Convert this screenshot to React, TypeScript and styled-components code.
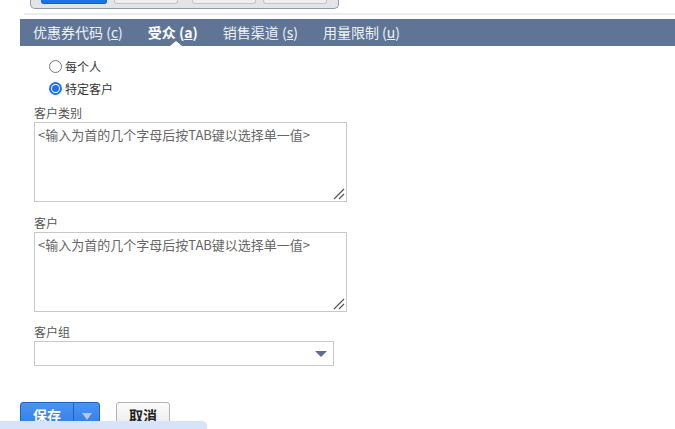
import React from 'react'
import styled, { createGlobalStyle } from 'styled-components'

const GlobalStyle = createGlobalStyle`
  html, body {
    margin: 0;
    padding: 0;
    background: #fff;
    overflow: hidden;
  }
  body {
    font-family: "Noto Sans CJK SC", "Open Sans", sans-serif;
    color: #333;
  }
`

const Page = styled.div`
  width: 675px;
  height: 429px;
  position: relative;
  overflow: hidden;
`

const TopStrip = styled.div`
  padding-left: 30px;
`

const ButtonTray = styled.div`
  box-sizing: border-box;
  width: 309px;
  height: 9px;
  display: flex;
  align-items: flex-end;
  gap: 7px;
  padding: 0 9px 4px 10px;
  background: #e2e4e8;
  border: 1px solid #8e9bb3;
  border-top: none;
  border-radius: 0 0 5px 5px;
`

const TrayButton = styled.div<{ $primary?: boolean; $gapLeft?: boolean }>`
  width: ${(p) => (p.$primary ? 66 : 64)}px;
  height: 5px;
  margin-left: ${(p) => (p.$gapLeft ? 7 : 0)}px;
  border-radius: 0 0 3px 3px;
  box-sizing: border-box;
  background: ${(p) => (p.$primary ? '#1a73e8' : '#eeeeee')};
  border: 1px solid ${(p) => (p.$primary ? '#1560c8' : '#c4c4c4')};
  border-top: none;
`

const Rule = styled.div`
  margin: 4px 0 0 24px;
  height: 2px;
  background: #ececec;
`

const TabBar = styled.div`
  margin: 4px 0 0 20px;
  height: 27px;
  background: #607595;
  display: flex;
  align-items: center;
  padding-left: 13px;
  gap: 25px;
`

const Tab = styled.div<{ $active?: boolean }>`
  position: relative;
  font-size: 14px;
  line-height: 27px;
  font-weight: ${(p) => (p.$active ? 700 : 400)};
  color: ${(p) => (p.$active ? '#ffffff' : '#eef2f8')};
  white-space: nowrap;

  u {
    text-decoration: underline;
  }

  ${(p) =>
    p.$active &&
    `
    &::after {
      content: '';
      position: absolute;
      left: 50%;
      bottom: 0;
      margin-left: -3px;
      border-left: 6px solid transparent;
      border-right: 6px solid transparent;
      border-bottom: 5px solid #ffffff;
    }
  `}
`

const Form = styled.div`
  padding: 13px 0 0 34px;
  display: flex;
  flex-direction: column;
`

const RadioGroup = styled.div`
  padding-left: 15px;
  display: flex;
  flex-direction: column;
  gap: 7px;
  margin-bottom: 10px;
`

const RadioRow = styled.label`
  display: flex;
  align-items: center;
  gap: 3px;
  font-size: 12px;
  line-height: 15px;
  color: #333;
`

const RadioDot = styled.span<{ $checked?: boolean }>`
  box-sizing: border-box;
  width: 13px;
  height: 13px;
  border-radius: 50%;
  border: ${(p) => (p.$checked ? '2px solid #1a73e8' : '1px solid #767676')};
  background: #fff;
  display: flex;
  align-items: center;
  justify-content: center;

  &::after {
    content: '';
    display: ${(p) => (p.$checked ? 'block' : 'none')};
    width: 7px;
    height: 7px;
    border-radius: 50%;
    background: #1a73e8;
  }
`

const Field = styled.div<{ $gap?: number }>`
  display: flex;
  flex-direction: column;
  margin-bottom: ${(p) => p.$gap ?? 0}px;
`

const Label = styled.div`
  font-size: 12px;
  line-height: 14px;
  color: #555;
  margin-bottom: 2px;
`

const TextBox = styled.div`
  position: relative;
  box-sizing: border-box;
  width: 313px;
  height: 80px;
  border: 1px solid #c8c8c8;
  padding: 4px 3px;
  font-size: 13px;
  line-height: 16px;
  color: #666;
`

const Grip = styled.svg`
  position: absolute;
  right: 1px;
  bottom: 1px;
`

const Select = styled.div`
  box-sizing: border-box;
  width: 300px;
  height: 25px;
  border: 1px solid #c8c8c8;
  display: flex;
  align-items: center;
  justify-content: flex-end;
  padding-right: 6px;
`

const Caret = styled.span`
  width: 0;
  height: 0;
  border-left: 6px solid transparent;
  border-right: 6px solid transparent;
  border-top: 6px solid #5a6f8f;
`

const Actions = styled.div`
  padding: 36px 0 0 20px;
  display: flex;
  gap: 16px;
`

const SplitButton = styled.div`
  display: flex;
  height: 30px;
  border: 1px solid #1d62c6;
  border-radius: 3px;
  overflow: hidden;
  background: linear-gradient(#4b93ef, #2a78e4);
`

const SaveMain = styled.div`
  width: 52px;
  display: flex;
  justify-content: center;
  padding-top: 2px;
  font-size: 14px;
  font-weight: 700;
  color: #fff;
  border-right: 1px solid #1d62c6;
`

const SaveMore = styled.div`
  width: 25px;
  display: flex;
  justify-content: center;
  padding-top: 10px;

  &::before {
    content: '';
    width: 0;
    height: 0;
    border-left: 5px solid transparent;
    border-right: 5px solid transparent;
    border-top: 7px solid #b9c6da;
  }
`

const CancelButton = styled.div`
  box-sizing: border-box;
  width: 54px;
  height: 30px;
  border: 1px solid #b4b4b4;
  border-radius: 3px;
  background: linear-gradient(#fafafa, #e9e9e9);
  display: flex;
  justify-content: center;
  padding-top: 2px;
  font-size: 14px;
  font-weight: 700;
  color: #222;
`

const BottomPeek = styled.div`
  position: absolute;
  left: 0;
  bottom: 0;
  width: 207px;
  height: 8px;
  background: #d6e3f8;
  border-radius: 0 5px 0 0;
`

const ResizeGrip = () => (
  <Grip width="12" height="12" viewBox="0 0 12 12">
    <path d="M1 11 L11 1 M6 11 L11 6" stroke="#555" strokeWidth="1.2" />
  </Grip>
)

const PLACEHOLDER = '<输入为首的几个字母后按TAB键以选择单一值>'

export default function App() {
  return (
    <Page>
      <GlobalStyle />
      <TopStrip>
        <ButtonTray>
          <TrayButton $primary />
          <TrayButton />
          <TrayButton $gapLeft />
          <TrayButton />
        </ButtonTray>
      </TopStrip>
      <Rule />
      <TabBar>
        <Tab>
          优惠券代码 (<u>c</u>)
        </Tab>
        <Tab $active>
          受众 (<u>a</u>)
        </Tab>
        <Tab>
          销售渠道 (<u>s</u>)
        </Tab>
        <Tab>
          用量限制 (<u>u</u>)
        </Tab>
      </TabBar>
      <Form>
        <RadioGroup>
          <RadioRow>
            <RadioDot />
            每个人
          </RadioRow>
          <RadioRow>
            <RadioDot $checked />
            特定客户
          </RadioRow>
        </RadioGroup>
        <Field $gap={14}>
          <Label>客户类别</Label>
          <TextBox>
            {PLACEHOLDER}
            <ResizeGrip />
          </TextBox>
        </Field>
        <Field $gap={13}>
          <Label>客户</Label>
          <TextBox>
            {PLACEHOLDER}
            <ResizeGrip />
          </TextBox>
        </Field>
        <Field>
          <Label>客户组</Label>
          <Select>
            <Caret />
          </Select>
        </Field>
      </Form>
      <Actions>
        <SplitButton>
          <SaveMain>保存</SaveMain>
          <SaveMore />
        </SplitButton>
        <CancelButton>取消</CancelButton>
      </Actions>
      <BottomPeek />
    </Page>
  )
}
